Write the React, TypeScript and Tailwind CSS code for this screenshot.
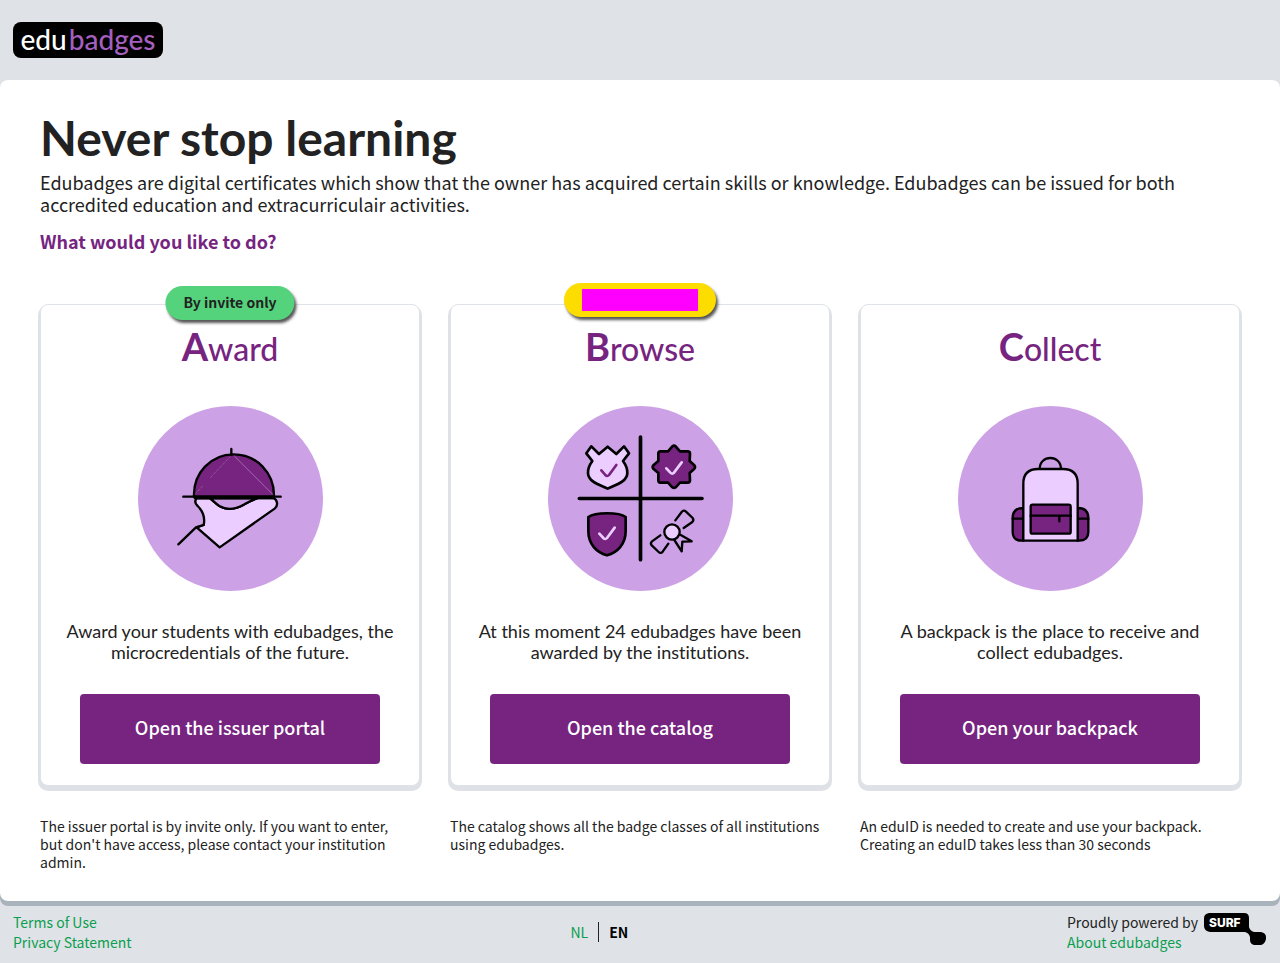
import type { ReactNode } from "react";

const heading = "font-['Lato','Liberation_Sans',sans-serif] [font-variant-ligatures:none]";

function AwardArt() {
  return (
    <svg viewBox="24 18 555 555" className="size-[185px]" aria-hidden="true">
      <circle cx="301.500" cy="295.500" r="277.500" fill="#cda1e5" />
      <g stroke="#000" strokeWidth="7" strokeLinecap="round" strokeLinejoin="round">
        <path
          d="M200 295C193 304 195 311 203 318C220 335 226 352 221 375L200 382L269 442L434 326C445 317 443 300 430 294H385C368 299 354 307 341 314C316 328 290 331 268 318C257 311 251 303 240 295Z"
          fill="#ebcdff"
        />
        <path d="M240 295C251 303 257 311 268 318C290 331 316 328 341 314C354 307 368 299 385 294Z" fill="#cda1e5" />
        <path d="M192 290C189 219 243 163 311 163S434 219 432 290Z" fill="#76247f" />
        <path d="M304 147V163M160 290H452M194 294H430" fill="none" />
        <path d="M145 433L198 382L221 375" fill="none" />
      </g>
      <path d="M313 168L429 284" stroke="#b98acb" strokeWidth="2" />
      <path d="M299 172L240 234M218 258L196 281" stroke="#b98acb" strokeWidth="2" strokeDasharray="3 3" />
    </svg>
  );
}

function BrowseArt() {
  return (
    <svg viewBox="24 18 555 555" className="size-[185px]" aria-hidden="true">
      <circle cx="301.500" cy="295.500" r="277.500" fill="#cda1e5" />
      <g stroke="#000" strokeWidth="8" strokeLinecap="round" strokeLinejoin="round" fill="none">
        <path d="M301.500 111V479M118 295.500H486" strokeWidth="11" />
        <path
          d="M154 139L177 162L203 140L229 162L252 139L267 160L249 183C257 194 263 204 262 220C260 246 228 254 203 266C178 254 146 246 144 220C143 204 149 194 157 183L139 160Z"
          fill="#ebcdff"
        />
        <path
          d="M397 139Q402 135 407 139L420 154L443 154Q450 154 450 161L449 183L463 196Q467 201 463 206L449 219L450 241Q450 248 443 248L420 248L407 262Q402 266 397 262L384 248L361 248Q355 248 355 241L355 219L340 206Q336 201 340 196L355 183L355 161Q355 154 361 154L384 154Z"
          fill="#76247f"
        />
        <path
          d="M145 351C166 336 237 336 257 351V393C257 433 232 457 201 466C170 457 145 433 145 393Z"
          fill="#76247f"
        />
        <path d="M184 211L196 225Q202 231 207 225L229 195" stroke="#76247f" />
        <path d="M379 205L391 218Q397 224 402 218L425 187M178 401L190 414Q196 420 201 414L224 383" stroke="#ebcdff" />
        <circle cx="396" cy="396" r="23" fill="#ebcdff" strokeWidth="7" />
        <path
          d="M406 361L425 336Q431 328 438 335L458 354Q463 361 456 367L431 384M361 406L335 425Q330 431 336 437L356 456Q362 462 368 455L385 431"
          strokeWidth="7"
        />
        <path d="M403 420L425 454L427 425L455 424L421 404" strokeWidth="7" />
      </g>
    </svg>
  );
}

function BackpackArt() {
  return (
    <svg viewBox="24 18 555 555" className="size-[185px]" aria-hidden="true">
      <circle cx="301.500" cy="295.500" r="277.500" fill="#cda1e5" />
      <g stroke="#000" strokeWidth="7" strokeLinecap="round" strokeLinejoin="round" fill="none">
        <path d="M269 207C269 163 333 163 333 207" />
        <path
          d="M220 324Q188 324 188 354V396Q188 422 216 422H220ZM383 324Q415 324 415 354V396Q415 422 387 422H383Z"
          fill="#76247f"
        />
        <path d="M188 356H220M383 356H415" />
        <path d="M220 422V251Q220 207 264 207H339Q383 207 383 251V422Z" fill="#ebcdff" />
        <rect x="242" y="314" width="120" height="87" rx="6" fill="#76247f" />
        <path d="M242 347H362M328 347V364" />
      </g>
    </svg>
  );
}

function SurfLogo() {
  return (
    <svg viewBox="0 0 63 33" className="mt-px h-[33px] w-[63px] shrink-0" role="img" aria-label="SURF">
      <path
        d="M5 0H40Q45 0 45 5V14Q46 18 50 19H57Q62 20 62 24V26Q61 31 57 32H50Q46 31 46 27V24Q45 20 41 19H6Q0 18 0 13V5Q0 1 5 0Z"
        fill="#000"
      />
      <text x="5" y="14" fill="#fff" fontSize="12" fontWeight="800" fontFamily="Inter, sans-serif">
        SURF
      </text>
    </svg>
  );
}

interface CardProps {
  title: string;
  badge?: ReactNode;
  art: ReactNode;
  text: string;
  action: string;
  note: string;
}

function Card({ title, badge, art, text, action, note }: CardProps) {
  return (
    <section className="flex flex-col">
      <div className="relative flex flex-col items-center rounded-lg border border-[#dfe2e7] bg-white px-5 pt-[17px] pb-[21px] shadow-[0_3px_0_2px_#dee2e7]">
        {badge}
        <h2 className={`${heading} text-[32px] leading-[48px] font-medium text-[#76247f]`}>
          <span className="text-[38px] font-bold">{title[0]}</span>
          {title.slice(1)}
        </h2>
        <div className="mt-[33px]">{art}</div>
        <p className={`${heading} mt-[30px] text-center text-lg leading-[21px] text-[#222]`}>{text}</p>
        <button
          type="button"
          className="mt-[31px] h-[70px] w-full max-w-[300px] cursor-pointer rounded bg-[#76247f] pb-1 text-lg font-medium text-white"
        >
          {action}
        </button>
      </div>
      <p className="mt-[31px] pr-2 text-sm leading-[18px]">{note}</p>
    </section>
  );
}

const pill =
  "absolute left-1/2 flex h-[34px] -translate-x-1/2 items-center rounded-full px-[18px] shadow-[2px_3px_3px_#555]";

export default function App() {
  return (
    <div className="flex min-h-screen flex-col bg-[#dfe2e7] font-['Noto_Sans_CJK_JP','Noto_Sans',sans-serif] text-[#222]">
      <header className="flex h-20 items-center px-[13px]">
        <a
          href="#home"
          className={`${heading} flex h-9 w-[150px] items-center justify-center gap-[2px] rounded-lg bg-black pb-[2px] text-[28px] leading-none font-medium text-white`}
        >
          <span>edu</span>
          <span className="text-[#a45fbf]">badges</span>
        </a>
      </header>

      <main className="rounded-lg bg-white px-10 pt-[30px] pb-[30px] shadow-[0_5px_0_#a9b3bc]">
        <h1 className={`${heading} text-5xl leading-[56px] font-bold`}>Never stop learning</h1>
        <p className="mt-[5px] text-lg leading-[22px]">
          Edubadges are digital certificates which show that the owner has acquired certain skills or knowledge.
          Edubadges can be issued for both accredited education and extracurriculair activities.
        </p>
        <p className="mt-[15px] text-lg leading-[22px] font-bold text-[#76247f]">What would you like to do?</p>
        <div className="mt-[52px] grid grid-cols-3 gap-[30px]">
          <Card
            title="Award"
            badge={<span className={`${pill} -top-[19px] bg-[#55d37c] pb-[3px] text-sm font-bold`}>By invite only</span>}
            art={<AwardArt />}
            text="Award your students with edubadges, the microcredentials of the future."
            action="Open the issuer portal"
            note="The issuer portal is by invite only. If you want to enter, but don't have access, please contact your institution admin."
          />
          <Card
            title="Browse"
            badge={
              <span className={`${pill} -top-[22px] bg-[#fddc00]`}>
                <span className="h-[22px] w-[116px] bg-[#ff00ff]" />
              </span>
            }
            art={<BrowseArt />}
            text="At this moment 24 edubadges have been awarded by the institutions."
            action="Open the catalog"
            note="The catalog shows all the badge classes of all institutions using edubadges."
          />
          <Card
            title="Collect"
            art={<BackpackArt />}
            text="A backpack is the place to receive and collect edubadges."
            action="Open your backpack"
            note="An eduID is needed to create and use your backpack. Creating an eduID takes less than 30 seconds"
          />
        </div>
      </main>

      <footer className="mt-[5px] flex items-start justify-between px-[13px] pt-[6px] text-sm leading-5">
        <nav className="flex flex-col items-start text-[#0a9f4f]">
          <a href="#terms">Terms of Use</a>
          <a href="#privacy">Privacy Statement</a>
        </nav>
        <div className="mt-[10px] flex items-center">
          <button type="button" className="cursor-pointer border-r border-[#222] pr-[10px] text-[#0a9f4f]">
            NL
          </button>
          <button type="button" className="cursor-pointer pl-[10px] font-bold text-black">
            EN
          </button>
        </div>
        <div className="flex items-start gap-[6px]">
          <div className="flex flex-col items-start">
            <span>Proudly powered by</span>
            <a href="#about" className="text-[#0a9f4f]">
              About edubadges
            </a>
          </div>
          <SurfLogo />
        </div>
      </footer>
    </div>
  );
}
